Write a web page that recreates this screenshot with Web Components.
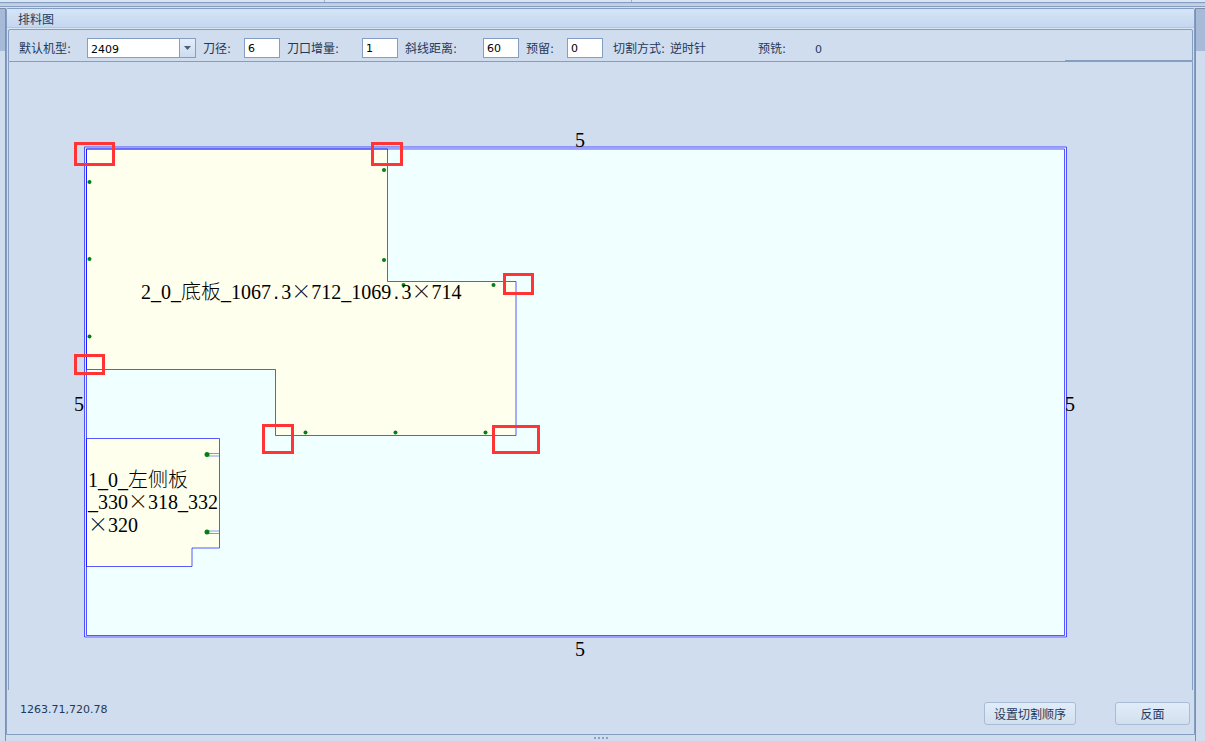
<!DOCTYPE html>
<html lang="zh-CN">
<head>
<meta charset="utf-8">
<title>排料图</title>
<style>
  html, body { margin: 0; }
  body {
    --line: #859dc0;
    --face: #d0ddee;
    --ink: #1e395b;
    color: var(--ink);
    background: var(--face);
    font: 12px/16px "DejaVu Sans", "Noto Sans CJK SC", sans-serif;
  }
</style>
</head>
<body>
<nest-window></nest-window>

<script>
const define = (name, html, setup) => {
  const template = document.createElement('template');
  template.innerHTML = html;
  customElements.define(name, class extends HTMLElement {
    constructor() {
      super();
      this.attachShadow({ mode: 'open' }).append(template.content.cloneNode(true));
    }
    connectedCallback() { if (setup) setup(this, this.shadowRoot); }
  });
};

const fieldStyle = `
  :host { display: flex; align-items: center; height: 20px; }
  label, .name, .value { padding-top: 2px; white-space: nowrap; font: 12px/16px "DejaVu Sans", "Noto Sans CJK SC", sans-serif; }
  label, .name { width: var(--label, 40px); }
  input, select {
    box-sizing: border-box; height: 20px; margin: 0; padding: 1px 3px 0;
    border: 1px solid var(--line); border-radius: 0; outline: 0;
    background: #fff; color: #000; font: 11px/17px "DejaVu Sans", sans-serif;
  }`;

define('number-field', `
  <style>${fieldStyle} input { width: 36px; }</style>
  <label for="box"><slot></slot></label><input id="box" type="text">`,
  (host, root) => { root.querySelector('input').value = host.getAttribute('value'); });

define('choice-field', `
  <style>${fieldStyle}
    .combo { display: grid; grid-template-columns: 1fr 17px; width: 109px; }
    select { grid-area: 1 / 1 / 2 / 3; appearance: none; width: 100%; padding-top: 2px; }
    .drop {
      grid-area: 1 / 2 / 2 / 3; z-index: 1; pointer-events: none; box-sizing: border-box;
      border: 1px solid var(--line); background: linear-gradient(#e3eefa, #cddcee);
      display: grid; place-items: center;
    }
    svg { display: block; }
  </style>
  <label for="box"><slot></slot></label>
  <span class="combo">
    <select id="box"><option>2409</option></select>
    <span class="drop"><svg width="7" height="4" viewBox="0 0 7 4"><path d="M0 0H7L3.5 4Z" fill="#4c607a"/></svg></span>
  </span>`);

define('read-out', `
  <style>${fieldStyle}
  ::slotted(b) { font-weight: 400; font-size: 11px; }</style>
  <span class="name"><slot></slot></span><span class="value"><slot name="value"></slot></span>`);

define('push-button', `
  <style>
    :host { display: block; }
    button {
      display: block; box-sizing: border-box; width: 100%; height: 23px; padding: 0; margin: 0;
      border: 1px solid #a9bbd5; border-radius: 3px;
      background: linear-gradient(#e0ecf9, #d2e0ee);
      color: inherit; font: 12px/21px "Noto Sans CJK SC", sans-serif;
    }
  </style>
  <button type="button"><slot></slot></button>`);

define('panel-title', `
  <style>
    :host {
      display: block; box-sizing: border-box; height: 20px; padding: 2px 11px 0;
      background: linear-gradient(#d5e5f7, #c4d7ef 18px, #b0c6e2 18px, #b0c6e2 19px, #d9e6f5 19px);
    }
    h1 { margin: 0; font: 12px/16px "Noto Sans CJK SC", sans-serif; }
  </style>
  <h1><slot></slot></h1>`);

define('tool-bar', `
  <style>
    :host {
      display: flex; align-items: center; gap: 7px; margin: 0 1px; padding: 8px 10px 3px;
      border: 1px solid var(--line); border-radius: 2px 2px 0 0;
      background: linear-gradient(var(--line), var(--line)) right bottom / 127px 1px no-repeat var(--face);
    }
  </style>
  <slot></slot>`);

define('nest-canvas', `
  <style>
    :host { display: block; margin: 0 1px; border: solid var(--line); border-width: 0 1px; }
    svg { display: block; width: 100%; height: auto; }
    text { font: 20px "Liberation Serif", "Noto Sans CJK SC", serif; fill: #000; }
    .cjk { font-family: "Noto Sans CJK SC", sans-serif; font-weight: 300; }
    .dot { font: 17px "Liberation Mono", monospace; }
    .size { text-anchor: middle; }
    .edge { fill: none; stroke: #0000ff; stroke-opacity: .65; }
    .part { fill: #ffffee; stroke: #0000ff; stroke-opacity: .65; }
    .holes { fill: #008015; }
    .marks { fill: none; stroke: #ff3535; stroke-width: 3; }
  </style>
  <svg viewBox="9 62 1183 628" role="img" aria-label="排料图">
    <rect x="86" y="149" width="979" height="487" fill="#f0ffff"/>
    <path fill="#e8ecff" fill-rule="evenodd" d="M84 147H1067V638H84ZM86 149V636H1065V149Z"/>
    <path class="part" d="M86.500 149H387.500V281.500H516V435.500H275.500V369.500H86.500Z"/>
    <path class="part" d="M86.500 438.500H219.500V548H192V566.500H86.500Z"/>
    <path class="edge" d="M84.500 147H1066.500V637H84.500ZM86.500 149H1064.500V635.500H86.500Z"/>
    <path d="M209 453.500H219M209 456H219M209 531H219M209 533.500H219" stroke="#7c9bee" fill="none"/>
    <g class="holes">
      <circle cx="89.500" cy="182" r="2"/><circle cx="89.500" cy="259" r="2"/><circle cx="89.500" cy="336.500" r="2"/>
      <circle cx="384" cy="170" r="2"/><circle cx="384" cy="260" r="2"/>
      <circle cx="403.500" cy="285" r="2"/><circle cx="493.500" cy="285" r="2"/>
      <circle cx="305.500" cy="432.500" r="2"/><circle cx="395.500" cy="432.500" r="2"/><circle cx="485.500" cy="432.500" r="2"/>
      <circle cx="207" cy="454.500" r="2.500"/><circle cx="207" cy="532" r="2.500"/>
    </g>
    <text x="141" y="299">2_0_<tspan class="cjk">底板</tspan>_1067<tspan class="dot">.</tspan>3<tspan class="cjk">×</tspan>712_1069<tspan class="dot">.</tspan>3<tspan class="cjk">×</tspan>714</text>
    <text x="88" y="487">1_0_<tspan class="cjk">左侧板</tspan><tspan x="88" y="509">_330</tspan><tspan class="cjk">×</tspan>318_332<tspan class="cjk" x="88" y="532">×</tspan>320</text>
    <text class="size" x="580" y="147">5</text>
    <text class="size" x="580" y="656">5</text>
    <text class="size" x="79" y="411">5</text>
    <text class="size" x="1070" y="411">5</text>
    <g class="marks">
      <rect x="75.500" y="143.500" width="38" height="21"/>
      <rect x="372.500" y="143.500" width="29" height="21"/>
      <rect x="504.500" y="274.500" width="28" height="19"/>
      <rect x="493.500" y="426.500" width="45" height="26"/>
      <rect x="75.500" y="355.500" width="28" height="18"/>
      <rect x="263.500" y="425.500" width="29" height="27"/>
    </g>
  </svg>`);

define('status-bar', `
  <style>
    :host { display: flex; align-items: flex-start; gap: 39px; padding: 12px 4px 9px 13px; }
    output { flex: 1; font: 11px/16px "DejaVu Sans", sans-serif; }
  </style>
  <output>1263.71,720.78</output><slot></slot>`);

define('side-strip', `
  <style>
    :host { display: block; background: linear-gradient(#7d8da8 1px, #a7bbd8 1px, #a7bbd8 43px, var(--face) 43px); }
    :host([side="left"]) { border-right: 1px solid #7f90ad; }
    :host([side="right"]) { border-left: 1px solid #7f90ad; }
  </style>`);

define('grip-handle', `
  <style>
    :host { display: flex; justify-content: center; gap: 2px; height: 4px; padding-top: 2px; }
    i { width: 2px; height: 2px; background: #8ba2c2; }
  </style>
  <i></i><i></i><i></i><i></i>`);

define('nest-window', `
  <style>
    :host { display: flex; flex-direction: column; min-height: 100vh; }
    .top {
      box-sizing: border-box; height: 8px;
      background:
        linear-gradient(#9fb0c8, #9fb0c8) 324px 0 / 1px 2px no-repeat,
        linear-gradient(#9fb0c8, #9fb0c8) 631px 0 / 1px 2px no-repeat,
        linear-gradient(#d8e5f5 2px, var(--line) 2px, var(--line) 3px, #b9c8dc 3px, #c9d6e6 6px, var(--line) 6px, var(--line) 7px, #d5e1f0 7px);
    }
    .body { flex: 1; display: grid; grid-template-columns: 6px minmax(0, 1fr) 10px; }
    .column { display: flex; flex-direction: column; }
    main { flex: 1; border: 1px solid var(--line); border-radius: 2px 2px 0 0; background: var(--face); }
    .w68 { --label: 68px; } .w41 { --label: 41px; } .w75 { --label: 75px; } .w78 { --label: 78px; } .w57 { --label: 57px; }
    .way { margin: 0 45px 0 3px; }
    .order { width: 92px; } .flip { width: 75px; }
  </style>
  <div class="top"></div>
  <div class="body">
    <side-strip side="left"></side-strip>
    <div class="column">
      <main>
        <panel-title>排料图</panel-title>
        <tool-bar>
          <choice-field class="w68">默认机型:</choice-field>
          <number-field class="w41" value="6">刀径:</number-field>
          <number-field class="w75" value="1">刀口增量:</number-field>
          <number-field class="w78" value="60">斜线距离:</number-field>
          <number-field class="w41" value="0">预留:</number-field>
          <read-out class="w57 way">切割方式:<span slot="value">逆时针</span></read-out>
          <read-out class="w57">预铣:<b slot="value">0</b></read-out>
        </tool-bar>
        <nest-canvas></nest-canvas>
        <status-bar>
          <push-button class="order">设置切割顺序</push-button>
          <push-button class="flip">反面</push-button>
        </status-bar>
      </main>
      <grip-handle></grip-handle>
    </div>
    <side-strip side="right"></side-strip>
  </div>`);
</script>
</body>
</html>
